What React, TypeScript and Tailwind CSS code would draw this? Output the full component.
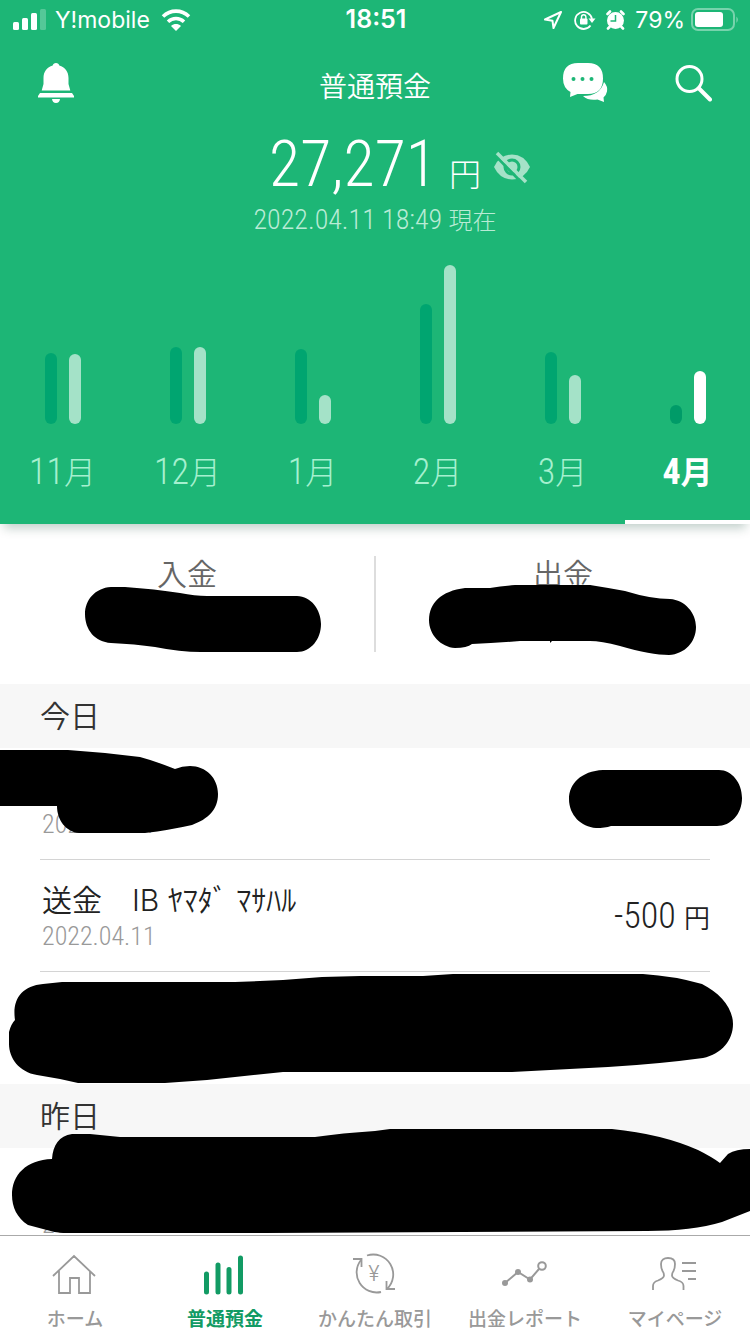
import type { ReactNode } from "react"

const numberFont = "font-['Roboto_Condensed','Liberation_Sans_Narrow',Roboto,'Noto_Sans_CJK_JP',sans-serif]"

const months = [
  { label: "11", deposit: 71, withdrawal: 70 },
  { label: "12", deposit: 77, withdrawal: 77 },
  { label: "1", deposit: 75, withdrawal: 29 },
  { label: "2", deposit: 120, withdrawal: 159 },
  { label: "3", deposit: 72, withdrawal: 49 },
  { label: "4", deposit: 19, withdrawal: 53, active: true },
]

const StatusBar = () => {
  return (
    <div className="h-10 grid grid-cols-[1fr_auto_1fr] items-center pl-[13px] pr-[11px] font-[Inter,sans-serif] text-[23px]">
      <div className="flex items-center gap-[9px]">
        <svg width="33" height="22" viewBox="0 0 33 22" fill="currentColor" aria-hidden="true">
          <rect x="0" y="13" width="6" height="8" rx="1.5" />
          <rect x="9" y="9" width="6" height="12" rx="1.5" />
          <rect x="18" y="4" width="6" height="17" rx="1.5" />
          <rect x="27" y="0" width="6" height="21" rx="1.5" opacity="0.25" />
        </svg>
        <span>Y!mobile</span>
        <svg width="34" height="22" viewBox="0 0 34 22" aria-hidden="true">
          <path d="M4 7.500C11.500 .3 22.500 .3 30 7.500M9 12.700c4.600-4.300 11.400-4.300 16 0" fill="none" stroke="currentColor" strokeWidth="3.600" />
          <path d="M12 17c3-2.600 7-2.600 10 0l-5 5z" fill="currentColor" />
        </svg>
      </div>
      <div className="text-[25px] font-semibold">18:51</div>
      <div className="flex items-center justify-end">
        <svg width="18" height="20" viewBox="0 0 18 20" fill="none" stroke="currentColor" strokeWidth="2" strokeLinejoin="round" aria-hidden="true">
          <path d="M17 2L1 9.500l7.500 1.300L9.500 18z" />
        </svg>
        <svg className="ml-3" width="22" height="20" viewBox="0 0 22 20" aria-hidden="true">
          <path d="M16.500 15.500A8.500 8.500 0 1 1 18 9" fill="none" stroke="currentColor" strokeWidth="1.800" />
          <path d="M14.500 8.500h7l-3.500 4.500z" fill="currentColor" />
          <rect x="6" y="8.500" width="7.500" height="6" rx="1" fill="currentColor" />
          <path d="M7.500 9V7a2.200 2.200 0 0 1 4.400 0v2" fill="none" stroke="currentColor" strokeWidth="1.400" />
        </svg>
        <svg className="ml-[10px]" width="19" height="20" viewBox="0 0 19 20" aria-hidden="true">
          <circle cx="9.500" cy="10.500" r="8.500" fill="currentColor" />
          <path d="M1.500 4L4 1.500M17.500 4L15 1.500M3.500 17L2 18.500M15.500 17l1.500 1.500" stroke="currentColor" strokeWidth="2.600" strokeLinecap="round" />
          <path d="M9.500 5v6H4.500" fill="none" stroke="#1db676" strokeWidth="1.500" />
        </svg>
        <span className="ml-[10px]">79%</span>
        <svg className="ml-[5px]" width="49" height="24" viewBox="0 0 49 24" aria-hidden="true">
          <rect x="2" y="1" width="42" height="21" rx="6" fill="none" stroke="currentColor" strokeWidth="2" opacity="0.4" />
          <rect x="5" y="4" width="28" height="15" rx="3" fill="currentColor" />
          <path d="M46.500 8.500q2.500 3 0 6.500z" fill="currentColor" opacity="0.5" />
        </svg>
      </div>
    </div>
  )
}

const TitleBar = () => {
  return (
    <div className="h-[86px] grid grid-cols-[1fr_auto_1fr] items-center px-[38px]">
      <button type="button" aria-label="お知らせ" className="justify-self-start">
        <svg width="36" height="40" viewBox="0 0 36 40" fill="currentColor" aria-hidden="true">
          <path d="M18 0c1.800 0 3 1 3.300 2.500C27 4.200 30.500 8.500 30.500 15v6l1.800 6.500H3.700L5.500 21v-6c0-6.500 3.500-10.800 9.200-12.500C15 1 16.200 0 18 0z" />
          <path d="M2 30h32l2 3v1.500H0V33zM14 36h8q-.5 4-4 4t-4-4z" />
        </svg>
      </button>
      <h1 className="pt-2 text-[28px] font-[350]">普通預金</h1>
      <div className="flex items-center justify-end gap-[67px]">
        <button type="button" aria-label="チャット">
          <svg width="45" height="40" viewBox="0 0 45 40" aria-hidden="true">
            <path d="M41 19q4 4.500 3 9.500-.7 3.500-3.500 6l.5 4.500-6.500-2.500q-9 1.500-14.500-3.500Q37 33 41 19z" fill="currentColor" />
            <path d="M15 0h10q15 0 15 15.500T25 31H14.500L7 34l.500-5Q0 25 0 15.500 0 0 15 0z" fill="currentColor" />
            <circle cx="10.500" cy="16" r="2" fill="#1db676" />
            <circle cx="19.500" cy="16" r="2" fill="#1db676" />
            <circle cx="28.500" cy="16" r="2" fill="#1db676" />
          </svg>
        </button>
        <button type="button" aria-label="検索">
          <svg width="37" height="37" viewBox="0 0 37 37" fill="none" stroke="currentColor" strokeLinecap="round" aria-hidden="true">
            <circle cx="14.500" cy="14" r="12.500" strokeWidth="3" />
            <path d="M24 23.500L35 34.500" strokeWidth="4" />
          </svg>
        </button>
      </div>
    </div>
  )
}

const Balance = () => {
  return (
    <div>
      <div className="h-[76px] grid grid-cols-[1fr_auto_1fr] items-start">
        <p className={`col-start-2 text-[64px] leading-[78px] font-light ${numberFont}`}>
          27,271<span className="ml-3 text-[32px] leading-none">円</span>
        </p>
        <button type="button" aria-label="残高を隠す" className="ml-3 mt-6 justify-self-start text-[#a5e2c8]">
          <svg width="38" height="34" viewBox="0 0 38 34" aria-hidden="true">
            <path d="M1 17Q7 4.500 19 4.500T37 17Q31 29.500 19 29.500T1 17z" fill="currentColor" />
            <circle cx="19" cy="17" r="7" fill="none" stroke="#1db676" strokeWidth="3" />
            <path d="M2 5L30 34" stroke="#1db676" strokeWidth="3" />
            <path d="M4 3L33 32" stroke="currentColor" strokeWidth="3.500" />
          </svg>
        </button>
      </div>
      <p className={`text-center text-[28px] leading-9 font-light text-[#b8ebd5] ${numberFont}`}>
        2022.04.11 18:49 <span className="text-2xl leading-none">現在</span>
      </p>
    </div>
  )
}

const MonthChart = () => {
  return (
    <div className="grid grid-cols-6">
      {months.map((month) => (
        <button
          type="button"
          key={month.label}
          className={`pb-6 border-b-4 ${month.active ? "border-white text-white font-bold" : "border-transparent text-[#a5f0cf] font-light"}`}
        >
          <span className="h-[186px] flex items-end justify-center gap-3">
            <span className={`w-3 rounded-full ${month.active ? "bg-[#009b68]" : "bg-[#00a570]"}`} style={{ height: month.deposit }} />
            <span className={`w-3 rounded-full ${month.active ? "bg-white" : "bg-[#a4e2c8]"}`} style={{ height: month.withdrawal }} />
          </span>
          <span className={`block mt-6 text-4xl leading-[48px] ${numberFont}`}>
            {month.label}<span className="text-[32px] leading-none">月</span>
          </span>
        </button>
      ))}
    </div>
  )
}

// Marker stroke that hides private text below it
const Marker = ({ width, height, path, className }: { width: number; height: number; path: string; className: string }) => {
  return (
    <svg className={`absolute ${className}`} width={width} height={height} viewBox={`0 0 ${width} ${height}`} aria-hidden="true">
      <path d={path} fill="#000" />
    </svg>
  )
}

const Summary = () => {
  return (
    <div className="h-40 py-8 grid grid-cols-2 text-center text-[30px] leading-9 font-[350] text-[#666]">
      <div className="relative border-r border-[#ddd]">
        入金
        <Marker
          className="left-[85px] top-[30px]"
          width={236}
          height={66}
          path="M26 1H40Q70 3 95 7Q110 10 122 10H212C226 10 236 24 236 38C236 53 226 66 212 66H116Q95 66 70 61Q50 58 26 57C10 56 0 44 0 28C0 14 10 2 26 1Z"
        />
      </div>
      <div className="relative border-l border-[#ddd]">
        出金
        <Marker
          className="right-[54px] top-[29px]"
          width={267}
          height={70}
          path="M36 3H61Q74 1 86 0H161Q180 3 196 6Q222 14 241 14C256 15 267 28 267 42C267 57 256 69 240 70Q222 70 191 61Q172 56 161 56H123L121 58V56H91Q66 58 43 59Q38 63 26 63C12 62 0 50 0 35C0 18 12 6 36 3Z"
        />
      </div>
    </div>
  )
}

const DayHeader = ({ children }: { children: ReactNode }) => {
  return <h2 className="h-16 px-10 flex items-center bg-[#f7f7f7] text-[30px] font-[350] text-[#333]">{children}</h2>
}

const Row = ({ title, amount, last, children }: { title?: string; amount?: string; last?: boolean; children?: ReactNode }) => {
  return (
    <li className="relative px-10">
      <div className={`h-28 pl-[2px] flex items-center justify-between border-b ${last ? "border-transparent" : "border-[#d4d4d4]"}`}>
        <div>
          <p className="h-10 text-[30px] leading-10 font-[350] text-[#222] whitespace-pre">{title}</p>
          <p className={`text-[26px] leading-8 font-light text-[#999] ${numberFont}`}>2022.04.11</p>
        </div>
        {amount && (
          <p className={`text-4xl font-light text-[#222] ${numberFont}`}>
            {amount} <span className="text-[26px] leading-none font-[350]">円</span>
          </p>
        )}
      </div>
      {children}
    </li>
  )
}

const History = () => {
  return (
    <div>
      <DayHeader>今日</DayHeader>
      <ul>
        <Row>
          <Marker
            className="left-0 top-[2px]"
            width={218}
            height={83}
            path="M0 0H68L105 3 140 7Q155 11 175 19Q182 16 190 16C206 16 218 28 218 44C218 60 208 69 192 75Q170 80 145 83H79C66 82 57 70 57 56H0Z"
          />
          <Marker
            className="right-2 top-[22px]"
            width={173}
            height={58}
            path="M34 0H150C163 0 173 13 173 28C173 44 162 56 148 56H42Q36 58 27 58C12 57 0 45 0 29C0 14 12 1 34 0Z"
          />
        </Row>
        <Row title="送金　IB ﾔﾏﾀﾞ ﾏｻﾊﾙ" amount="-500" />
        <Row last>
          <Marker
            className="left-[9px] top-[2px]"
            width={724}
            height={110}
            path="M34 10L53 8H226L274 6 313 3 351 2H414L444 0H634Q665 2 693 10C711 19 724 34 724 50C724 66 713 80 694 84Q650 90 599 93L503 98H274L198 106 156 109H69L51 105 28 101C10 98 0 84 0 70V58Q2 50 6 46C3 26 12 12 34 10Z"
          />
        </Row>
      </ul>
      <DayHeader>昨日</DayHeader>
      <ul>
        <Row>
          <Marker
            className="left-3 -top-[19px]"
            width={738}
            height={104}
            path="M60 5H78L108 8H303Q330 4 363 2L378 0H600Q650 5 686 21Q700 28 708 34L716 25Q724 20 738 20V82L710 93Q680 102 635 102L255 104H51Q40 103 31 100L16 96C5 89 0 78 0 66C0 46 14 31 40 30C41 16 47 7 60 5Z"
          />
        </Row>
      </ul>
    </div>
  )
}

const NavItem = ({ label, active, children }: { label: string; active?: boolean; children: ReactNode }) => {
  return (
    <li>
      <a
        href="#"
        aria-current={active ? "page" : undefined}
        className={`h-[98px] pt-[15px] flex flex-col items-center gap-2 text-[19px] leading-[26px] ${active ? "text-[#129b64] font-bold" : "text-[#999] font-medium"}`}
      >
        <svg width="48" height="48" viewBox="0 0 48 48" fill="none" stroke="currentColor" strokeWidth="1.800" aria-hidden="true">
          {children}
        </svg>
        {label}
      </a>
    </li>
  )
}

const BottomNav = () => {
  return (
    <nav className="shrink-0 border-t border-[#aaa] bg-white">
      <ul className="grid grid-cols-5">
        <NavItem label="ホーム">
          <path d="M2 25L23 5L44 25M8 20V42H19V27H28V42H39V20" />
        </NavItem>
        <NavItem label="普通預金" active>
          <path d="M5.500 23V41M17 14V41M28 18.500V41M39.500 7V41" strokeWidth="5" strokeLinecap="round" />
        </NavItem>
        <NavItem label="かんたん取引">
          <path d="M16 4.500A20 20 0 0 1 36 38M10 9A20 20 0 0 0 30 41" />
          <path d="M2 8H10.500V16M35.500 30V38H44" />
          <text x="23" y="30" textAnchor="middle" fontSize="21" fontWeight="300" fontFamily="Inter, sans-serif" fill="currentColor" stroke="none">¥</text>
        </NavItem>
        <NavItem label="出金レポート">
          <path d="M4 32L17 21L29 28.500L38 18" strokeWidth="2" />
          <circle cx="4" cy="32" r="3" fill="currentColor" stroke="none" />
          <circle cx="17" cy="21" r="3" fill="currentColor" stroke="none" />
          <circle cx="29" cy="28.500" r="3" fill="currentColor" stroke="none" />
          <circle cx="41" cy="15" r="3.800" strokeWidth="2" />
        </NavItem>
        <NavItem label="マイページ">
          <path d="M2 39V35Q2 31 7 29.500Q13 27 13 24.500Q13 22 11.500 20Q10 17 10 13C10 9 13 7 17 7S24 9 24 13Q24 17 22.500 20Q21 22 21 24.500Q21 27 27 29.500Q32.500 31 32.500 35V39" />
          <path d="M31 12H45M31 20H45M37 28H45" />
        </NavItem>
      </ul>
    </nav>
  )
}

const App = () => {
  return (
    <div className="h-screen flex flex-col bg-white font-[Inter,'Noto_Sans_CJK_JP',sans-serif]">
      <header className="relative z-10 shrink-0 bg-[#1db676] text-white shadow-[0_8px_10px_-4px_rgba(0,60,40,0.25)]">
        <StatusBar />
        <TitleBar />
        <Balance />
        <MonthChart />
      </header>
      <main className="flex-1 min-h-0 overflow-x-hidden overflow-y-auto [scrollbar-width:none]">
        <Summary />
        <History />
      </main>
      <BottomNav />
    </div>
  )
}
export default App
